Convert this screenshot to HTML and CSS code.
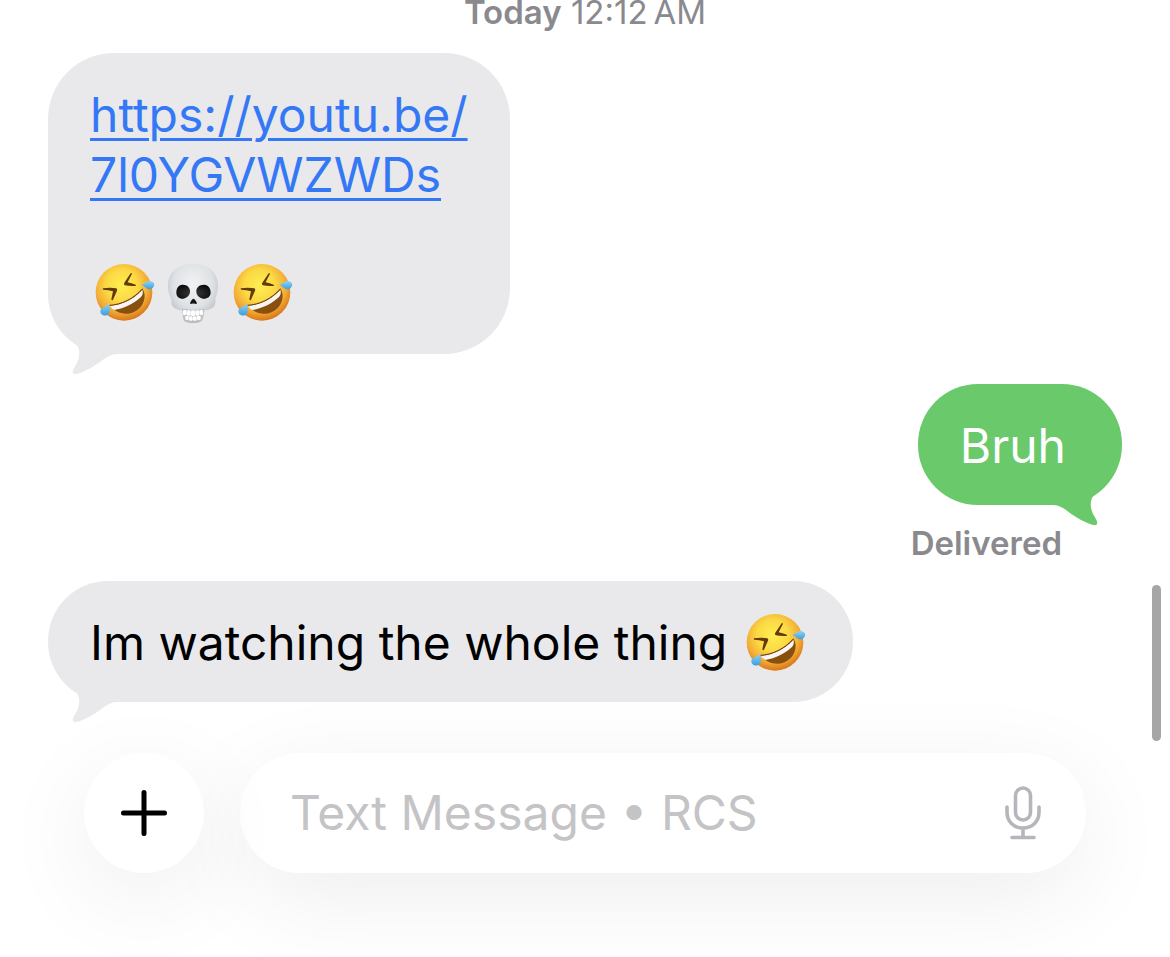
FILE: index.html
```html
<!DOCTYPE html>
<html lang="en">
<head>
<meta charset="utf-8">
<meta name="viewport" content="width=device-width, initial-scale=1">
<title>Messages</title>
<link rel="stylesheet" href="styles.css">
</head>
<body>
<svg class="defs" aria-hidden="true">
  <defs>
    <radialGradient id="face" cx="0.46" cy="0.38" r="0.62">
      <stop offset="0" stop-color="#ffee52"/>
      <stop offset="0.45" stop-color="#fbd944"/>
      <stop offset="0.75" stop-color="#f3ad36"/>
      <stop offset="1" stop-color="#d9771a"/>
    </radialGradient>
    <linearGradient id="tear" x1="0" y1="0" x2="0" y2="1">
      <stop offset="0" stop-color="#8fd3f5"/>
      <stop offset="1" stop-color="#3a9fe0"/>
    </linearGradient>
    <radialGradient id="bone" cx="0.5" cy="0.35" r="0.65">
      <stop offset="0" stop-color="#f1f2f4"/>
      <stop offset="0.6" stop-color="#dfe2e5"/>
      <stop offset="1" stop-color="#b4b9bf"/>
    </radialGradient>
    <radialGradient id="socket" cx="0.5" cy="0.6" r="0.6">
      <stop offset="0" stop-color="#3c3c3e"/>
      <stop offset="1" stop-color="#0b0b0c"/>
    </radialGradient>
  </defs>
  <symbol id="laugh" viewBox="45 39 180 180">
    <circle cx="132" cy="127" r="85" fill="url(#face)"/>
    <path fill="#633a0b" d="M69 115C82 113 98 113 109 115Q113 117 111 122L99 149Q96 153 94 148L99 124Q85 119 70 119Q67 117 69 115ZM151 71Q154 67 156 71L143 97Q155 100 167 104Q170 108 165 108Q148 109 135 106Q130 104 133 98Z"/>
    <path fill="#88500f" d="M89 166C124 164 160 147 187 116C198 130 196 155 180 173C156 199 111 197 89 166Z"/>
    <path fill="#f8f5f2" d="M90 167C124 165 160 149 187 119C190 128 188 136 182 142C160 163 128 177 103 180C97 177 92 172 90 167Z"/>
    <path fill="none" stroke="#6b3c0b" stroke-width="3" stroke-linecap="round" d="M89 166C124 164 160 147 187 117"/>
    <path fill="url(#tear)" d="M184 104C195 101 200 93 210 93C225 94 227 110 214 117C202 122 194 108 184 104Z"/>
    <path fill="url(#tear)" d="M88 161C89 172 93 186 83 194C73 201 60 193 61 182C63 171 80 170 88 161Z"/>
  </symbol>
  <symbol id="skull" viewBox="252 39 180 180">
    <path fill="url(#bone)" d="M339 41C385 41 415 68 414 108C413 128 408 138 406 148C409 170 394 179 374 181C370 195 372 209 362 215C350 220 328 220 316 215C306 209 310 195 306 181C286 179 271 170 274 148C270 138 264 128 264 108C263 68 293 41 339 41Z"/>
    <path fill="url(#socket)" d="M307 104C321 103 329 112 330 122C331 133 323 143 310 146C298 147 289 140 289 128C289 114 295 105 307 104ZM373 104C359 103 350 112 349 122C348 133 356 143 369 146C381 147 392 140 392 128C392 114 385 105 373 104Z"/>
    <path fill="#151516" d="M340 146C345 147 352 158 350 161C348 164 343 159 340 161C337 159 333 164 331 161C329 157 336 147 340 146Z"/>
    <path fill="#bfc3c8" d="M306 176Q340 182 374 176L370 194Q368 208 360 212Q340 216 320 212Q312 208 310 194Z"/>
    <g fill="#fff">
      <rect x="309" y="180" width="11" height="15" rx="4"/>
      <rect x="321" y="181" width="11" height="16" rx="4"/>
      <rect x="333" y="181" width="12" height="17" rx="4"/>
      <rect x="346" y="181" width="11" height="16" rx="4"/>
      <rect x="358" y="180" width="11" height="15" rx="4"/>
      <rect x="316" y="197" width="10" height="13" rx="4"/>
      <rect x="327" y="199" width="11" height="13" rx="4"/>
      <rect x="339" y="199" width="11" height="13" rx="4"/>
      <rect x="351" y="197" width="11" height="13" rx="4"/>
    </g>
  </symbol>
  <symbol id="tail" viewBox="0 0 72 62">
    <path fill="currentColor" d="M14 17L26 28C33 34 32 42 29 49C26 54 24 57 25 59C26 61 29 60 32 59C42 55 48 51 56 45C60 42 64 40 70 40L70 17Z"/>
  </symbol>
</svg>

<main class="thread">
  <p class="stamp"><b>Today</b> 12:12&#8239;AM</p>

  <div class="bubble received tall">
    <a class="link" href="https://youtu.be/7l0YGVWZWDs">https://youtu.be/<br>7l0YGVWZWDs</a>
    <div class="emoji-row">
      <svg class="emoji" role="img" aria-label="Rolling on the floor laughing"><use href="#laugh"/></svg>
      <svg class="emoji" role="img" aria-label="Skull"><use href="#skull"/></svg>
      <svg class="emoji" role="img" aria-label="Rolling on the floor laughing"><use href="#laugh"/></svg>
    </div>
    <svg class="tail" aria-hidden="true"><use href="#tail"/></svg>
  </div>

  <div class="bubble sent">
    <span>Bruh</span>
    <svg class="tail" aria-hidden="true"><use href="#tail"/></svg>
  </div>
  <p class="status">Delivered</p>

  <div class="bubble received inline">
    <span>Im watching the whole thing</span>
    <svg class="emoji" role="img" aria-label="Rolling on the floor laughing"><use href="#laugh"/></svg>
    <svg class="tail" aria-hidden="true"><use href="#tail"/></svg>
  </div>
</main>

<form class="composer">
  <button class="add" type="button" aria-label="Add">
    <svg width="48" height="48" viewBox="0 0 48 48" fill="none" stroke="#000" stroke-width="5" stroke-linecap="round"><path d="M24 3.500V44.500M3.500 24H44.500"/></svg>
  </button>
  <div class="field">
    <input class="entry" type="text" aria-label="Message" placeholder="Text Message • RCS">
    <button class="mic" type="button" aria-label="Dictate">
      <svg width="36" height="54" viewBox="0 0 36 54" fill="none" stroke="#b5b6bc" stroke-width="3.600" stroke-linecap="round"><rect x="10.500" y="2" width="15" height="32" rx="7.500"/><path d="M2 21V26C2 36 9 42 18 42C27 42 34 36 34 26V21M18 42V51.500M7 51.500H29"/></svg>
    </button>
  </div>
</form>
<div class="scroll-thumb"></div>
</body>
</html>
```
FILE: styles.css
```css
* {
  box-sizing: border-box;
}

body {
  margin: 0;
  min-height: 100vh;
  position: relative;
  overflow: hidden;
  background: #fff;
  color: #000;
  font-family: Inter, "Liberation Sans", sans-serif;
  font-size: 48px;
  line-height: 60px;
}

p {
  margin: 0;
}

button,
input {
  border: 0;
  padding: 0;
  background: none;
  font: inherit;
}

.defs {
  position: absolute;
  width: 0;
  height: 0;
}

.thread {
  display: flex;
  flex-direction: column;
  padding: 0 48px;
}

.stamp {
  margin-bottom: 29px;
  text-align: center;
  font-size: 33px;
  line-height: 24px;
  color: #8a8a8e;
}

.stamp b {
  font-weight: 600;
}

.bubble {
  position: relative;
  padding: 32px 42px 29px;
  border-radius: 60px;
}

.received {
  align-self: flex-start;
  background: #e9e9eb;
  color: #000;
}

.sent {
  align-self: flex-end;
  margin-top: 30px;
  padding-right: 56px;
  background: #6ac96b;
  color: #fff;
}

.tall {
  border-radius: 66px 66px 66px 60px;
}

.inline {
  display: flex;
  gap: 14px;
}

.link {
  color: #3478f6;
  text-decoration-thickness: 3px;
  text-underline-offset: 6px;
}

.emoji-row {
  display: flex;
  gap: 9px;
  margin: 58px 0 2px;
  padding-left: 5px;
}

.emoji {
  display: block;
  width: 60px;
  height: 60px;
}

.inline .emoji {
  margin: 0 5px;
}

.tail {
  position: absolute;
  left: 0;
  bottom: -22px;
  width: 72px;
  height: 62px;
  color: #e9e9eb;
}

.sent .tail {
  left: auto;
  right: 0;
  color: #6ac96b;
  transform: scaleX(-1);
}

.status {
  align-self: flex-end;
  margin: 18px 60px 18px 0;
  font-size: 33px;
  font-weight: 600;
  line-height: 40px;
  color: #8a8a8e;
}

.composer {
  position: relative;
  display: flex;
  gap: 36px;
  padding: 51px 84px 84px;
}

.add,
.field {
  height: 120px;
  border-radius: 60px;
  background: #fff;
  box-shadow: 0 24px 96px rgba(0, 0, 0, 0.07);
}

.add {
  position: relative;
  z-index: 1;
  flex: none;
  display: grid;
  place-items: center;
  width: 120px;
}

.field {
  position: relative;
  z-index: 1;
  flex: 1;
  min-width: 0;
  display: flex;
  align-items: center;
  padding: 0 45px 0 50px;
}

.add {
  z-index: 2;
}

.entry {
  flex: 1;
  min-width: 0;
  height: 60px;
  outline: 0;
}

.entry::placeholder {
  color: #c4c4c6;
  opacity: 1;
}

.mic {
  display: flex;
}

.scroll-thumb {
  position: absolute;
  right: 9px;
  top: 585px;
  width: 9px;
  height: 156px;
  border-radius: 5px;
  background: #a6a6a6;
}
```
